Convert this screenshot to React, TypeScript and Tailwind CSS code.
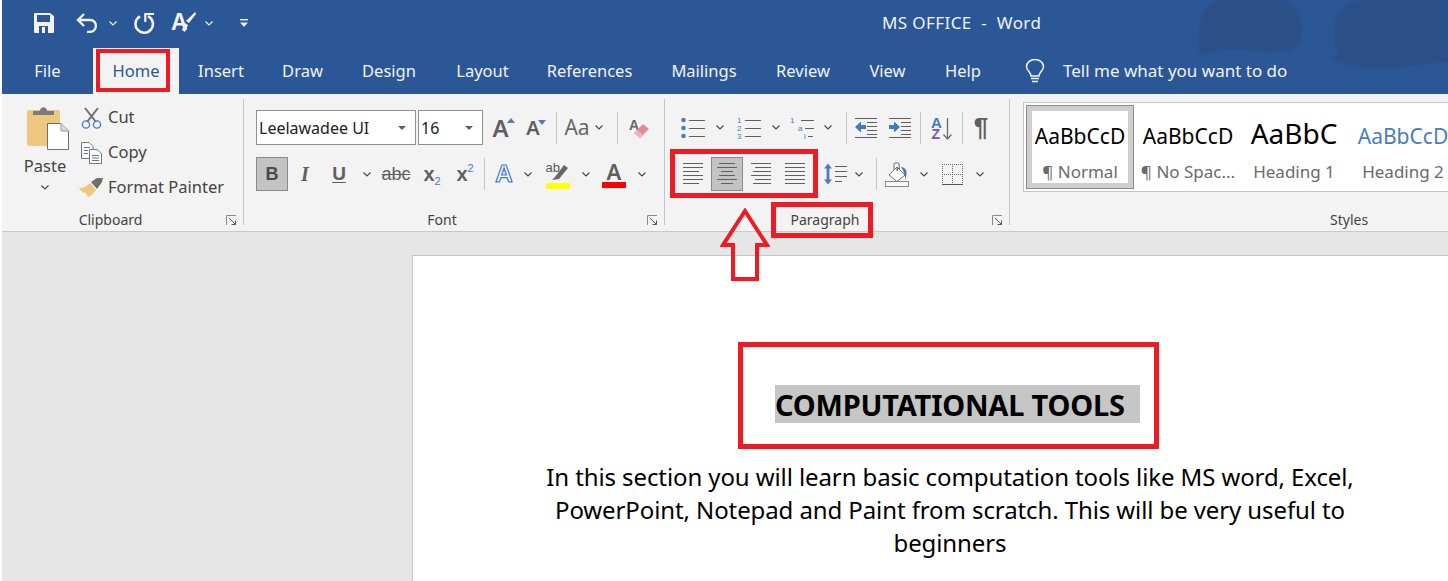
import type { ReactNode } from 'react'

const ribbonFont = "font-['Noto_Sans',sans-serif]"

const tabs = [
  { label: 'File', width: 'w-[91px]' },
  { label: 'Home', width: 'w-[86px]', active: true },
  { label: 'Insert', width: 'w-[84px]' },
  { label: 'Draw', width: 'w-[79px]' },
  { label: 'Design', width: 'w-[94px]' },
  { label: 'Layout', width: 'w-[93px]' },
  { label: 'References', width: 'w-[121px]' },
  { label: 'Mailings', width: 'w-[108px]' },
  { label: 'Review', width: 'w-[90px]' },
  { label: 'View', width: 'w-[79px]' },
  { label: 'Help', width: 'w-[72px]' },
]

function Chevron({ color = '#444444' }: { color?: string }) {
  return (
    <svg width="8" height="5" viewBox="0 0 8 5" className="shrink-0">
      <path d="M0.5 0.5 L4 4 L7.5 0.5" fill="none" stroke={color} strokeWidth="1.1" />
    </svg>
  )
}

function Slot({ className, children }: { className: string; children?: ReactNode }) {
  return <div className={`flex h-full shrink-0 items-center justify-center ${className}`}>{children}</div>
}

function Sep() {
  return <div className="h-[32px] w-px shrink-0 self-center bg-[#c6c6c6]" />
}

function Launcher() {
  return (
    <svg width="11" height="11" viewBox="0 0 11 11">
      <path d="M0.5 10 V0.5 H10" fill="none" stroke="#8a8a8a" />
      <path d="M3 3 L9.5 9.5 M9.5 5.5 V9.5 H5.5" fill="none" stroke="#555555" />
    </svg>
  )
}

function Group({ className, label, children }: { className: string; label: string; children: ReactNode }) {
  return (
    <div className={`flex h-[126px] shrink-0 flex-col border-r border-[#c6c6c6] pt-[11px] ${className}`}>
      {children}
      <div className="mt-auto flex h-[18px] translate-y-[4px] items-center">
        <div className="flex-1 text-center text-[14px] leading-[18px] text-[#444444]">{label}</div>
        <div className="flex w-[24px] justify-center">
          <Launcher />
        </div>
      </div>
    </div>
  )
}

function Lines({ rows, width = 20, gap = 4 }: { rows: [number, number][]; width?: number; gap?: number }) {
  return (
    <svg width={width} height={rows.length * gap} viewBox={`0 0 ${width} ${rows.length * gap}`}>
      {rows.map(([a, b], i) => (
        <line key={i} x1={a} x2={b} y1={i * gap + 1.5} y2={i * gap + 1.5} stroke="#5f5f5f" strokeWidth="1" />
      ))}
    </svg>
  )
}

function ListIcon({ kind }: { kind: 'bullets' | 'numbers' | 'multi' }) {
  return (
    <svg width="24" height="24" viewBox="0 0 24 24">
      {kind === 'bullets' && (
        <>
          <circle cx="2.5" cy="4" r="2.3" fill="#4a7ebb" />
          <circle cx="2.5" cy="12" r="2.3" fill="#4a7ebb" />
          <circle cx="2.5" cy="20" r="2.3" fill="#4a7ebb" />
        </>
      )}
      {kind === 'numbers' && (
        <g fill="#3f7cbf" fontSize="8" fontFamily="Liberation Sans">
          <text x="0" y="7">1</text>
          <text x="0" y="15">2</text>
          <text x="0" y="23">3</text>
        </g>
      )}
      {kind === 'multi' && (
        <g fill="#3f7cbf" fontSize="8" fontFamily="Liberation Sans">
          <text x="0" y="7">1</text>
          <text x="8" y="15">a</text>
          <text x="14" y="23">i</text>
        </g>
      )}
      <g stroke="#5f5f5f" strokeWidth="1">
        <line x1={kind === 'multi' ? 11 : 8} x2="24" y1="4.5" y2="4.5" />
        <line x1={kind === 'multi' ? 15 : 8} x2="24" y1="12.5" y2="12.5" />
        <line x1={kind === 'multi' ? 18 : 8} x2={kind === 'multi' ? 23 : 24} y1="20.5" y2="20.5" />
      </g>
    </svg>
  )
}

function IndentIcon({ flip }: { flip?: boolean }) {
  return (
    <svg width="22" height="22" viewBox="0 0 22 22">
      <g stroke="#5f5f5f" strokeWidth="1">
        <line x1="0" x2="22" y1="1.5" y2="1.5" />
        <line x1="12" x2="22" y1="5.5" y2="5.5" />
        <line x1="12" x2="22" y1="9.5" y2="9.5" />
        <line x1="12" x2="22" y1="13.5" y2="13.5" />
        <line x1="12" x2="22" y1="17.5" y2="17.5" />
        <line x1="0" x2="22" y1="20.5" y2="20.5" />
      </g>
      {flip ? (
        <path d="M0 8 H5 V4.5 L11 10 L5 15.5 V12 H0 Z" fill="#3f7cbf" />
      ) : (
        <path d="M11 8 H6 V4.5 L0 10 L6 15.5 V12 H11 Z" fill="#3f7cbf" />
      )}
    </svg>
  )
}

function SortIcon() {
  return (
    <svg width="22" height="28" viewBox="0 0 22 28">
      <text x="0" y="14" fontSize="15" fontWeight="700" fontFamily="Liberation Sans" fill="#3f7cbf">A</text>
      <text x="0.5" y="25" fontSize="14" fontWeight="700" fontFamily="Liberation Sans" fill="#8250a8">Z</text>
      <path d="M16.5 4 V25 M12.5 20.5 L16.5 25 L20.5 20.5" fill="none" stroke="#6a6a6a" strokeWidth="1.3" />
    </svg>
  )
}

function LineSpacingIcon() {
  return (
    <svg width="23" height="22" viewBox="0 0 23 22">
      <path d="M4 0.5 L8 5.5 H5.4 V16.5 H8 L4 21.5 L0 16.5 H2.6 V5.5 H0 Z" fill="#4a7ebb" />
      <g stroke="#5f5f5f">
        <line x1="11" x2="23" y1="3.5" y2="3.5" />
        <line x1="11" x2="23" y1="8.5" y2="8.5" />
        <line x1="11" x2="23" y1="13.5" y2="13.5" />
        <line x1="11" x2="18" y1="18.5" y2="18.5" />
      </g>
    </svg>
  )
}

function ShadingIcon() {
  return (
    <svg width="24" height="25" viewBox="0 0 24 25">
      <path d="M4 13 L12 5 L20 13 L12 19.5 Z" fill="#ffffff" stroke="#6f6f6f" />
      <path d="M9 8 V1.5 A3 1.5 0 0 1 14 1.5 L14.5 8" fill="none" stroke="#6f6f6f" />
      <path d="M11.5 5 H13 V9 H11.5 Z" fill="#6f6f6f" />
      <path d="M16 5 C20 5.5 22 8 21.5 12 L20.5 18 C20 14 19.5 10 16 5 Z" fill="#3f7cbf" />
      <rect x="0.5" y="19.5" width="23" height="5" fill="#f8f8f8" stroke="#8a8a8a" />
    </svg>
  )
}

function BordersIcon() {
  return (
    <svg width="21" height="21" viewBox="0 0 21 21">
      <g stroke="#666666" strokeDasharray="1 1" fill="none">
        <path d="M0 0.5 H21" />
        <path d="M0.5 0 V21" />
        <path d="M20.5 0 V21" />
        <path d="M10.5 0 V21" />
        <path d="M0 10.5 H21" />
      </g>
      <path d="M0 20.5 H21" stroke="#555555" />
    </svg>
  )
}

function PasteIcon() {
  return (
    <svg width="42" height="46" viewBox="0 0 42 46" className="translate-x-[3px]">
      <rect x="0" y="5" width="33" height="36" rx="2" fill="#edc87e" />
      <path d="M6 10 V6 H13 C13 1 20 1 20 6 H27 V10 Z" fill="#7b7b7b" />
      <path d="M20.5 18.5 H34 L41.5 26 V44.5 H20.5 Z" fill="#ffffff" stroke="#6f6f6f" />
      <path d="M34 18.5 V26 H41.5" fill="#d9d9d9" stroke="#9a9a9a" />
    </svg>
  )
}

function CutIcon() {
  return (
    <svg width="21" height="22" viewBox="0 0 21 22">
      <path d="M4 1 L15 15 M17 1 L6 15" stroke="#6f6f6f" strokeWidth="2" fill="none" />
      <circle cx="5" cy="17.5" r="3.6" fill="none" stroke="#4a7ebb" strokeWidth="1.4" />
      <circle cx="16" cy="17.5" r="3.6" fill="none" stroke="#4a7ebb" strokeWidth="1.4" />
    </svg>
  )
}

function CopyIcon() {
  return (
    <svg width="21" height="22" viewBox="0 0 21 22">
      <path d="M0.5 0.5 H8 L12 4.5 V16.5 H0.5 Z" fill="#ffffff" stroke="#777777" />
      <path d="M8.5 7.5 H16 L20.5 11.5 V21.5 H8.5 Z" fill="#ffffff" stroke="#777777" />
      <g stroke="#3f7cbf">
        <line x1="3" x2="9" y1="5.5" y2="5.5" />
        <line x1="3" x2="7" y1="8.5" y2="8.5" />
        <line x1="3" x2="7" y1="11.5" y2="11.5" />
        <line x1="11" x2="18" y1="13.5" y2="13.5" />
        <line x1="11" x2="18" y1="16" y2="16" />
        <line x1="11" x2="18" y1="18.5" y2="18.5" />
      </g>
    </svg>
  )
}

function BrushIcon() {
  return (
    <svg width="24" height="21" viewBox="0 0 24 21">
      <path d="M0 11 C5 11 8 9 11 6 L17 13 C14 17 11 20 9 20 L6 15 L4 16 Z" fill="#edc87e" />
      <path d="M12 5 L18 1 L24 1 L23 5 L18 12 Z" fill="#6f6f6f" />
    </svg>
  )
}

function EraserIcon() {
  return (
    <svg width="20" height="22" viewBox="0 0 20 22">
      <text x="0" y="13" fontSize="14" fontWeight="700" fontFamily="Liberation Sans" fill="#666666">A</text>
      <path d="M14 7 L20 12 L11 21 L5 16 Z" fill="#e8899a" />
      <path d="M5 16 L8 13 L14 18 L11 21 Z" fill="#f1b3bf" />
    </svg>
  )
}

function HighlightIcon() {
  return (
    <div className="relative h-[30px] w-[24px]">
      <span className="absolute left-0 top-[2px] font-['Liberation_Sans',sans-serif] text-[13px] leading-[13px] text-[#555555]">ab</span>
      <svg width="24" height="22" viewBox="0 0 24 22" className="absolute left-0 top-0">
        <path d="M9 18 L18 6 L22 9 L13 20 L6 21 Z" fill="#666666" />
      </svg>
      <div className="absolute bottom-0 left-0 h-[6px] w-[24px] bg-[#ffff00]" />
    </div>
  )
}

function FontColorIcon() {
  return (
    <div className="flex w-[24px] flex-col items-center">
      <span className="font-['Noto_Sans',sans-serif] text-[22px] font-semibold leading-[22px] text-[#5f5f5f]">A</span>
      <div className="h-[6px] w-[24px] bg-[#ff0000]" />
    </div>
  )
}

function BlueGlowA() {
  return (
    <span className="font-['Liberation_Sans',sans-serif] text-[24px] font-bold leading-none text-[#ffffff] [-webkit-text-stroke:1.2px_#3f7cbf]">
      A
    </span>
  )
}

function SizeA({ size, dir }: { size: string; dir: 'up' | 'down' }) {
  return (
    <div className="relative flex items-end">
      <span className={`font-['Noto_Sans',sans-serif] font-semibold leading-none text-[#5f5f5f] ${size}`}>A</span>
      <svg width="8" height="5" viewBox="0 0 8 5" className="absolute -right-[6px] top-[2px]">
        <path d={dir === 'up' ? 'M0 5 L4 0 L8 5 Z' : 'M0 0 L8 0 L4 5 Z'} fill="#4a7ebb" />
      </svg>
    </div>
  )
}

function Combo({ className, value }: { className: string; value: string }) {
  return (
    <div className={`flex h-full shrink-0 items-center justify-between border border-[#8f8f8f] bg-white pl-[2px] pr-[9px] text-[16px] text-[#222222] ${className}`}>
      <span>{value}</span>
      <svg width="8" height="4" viewBox="0 0 8 4">
        <path d="M0 0 H8 L4 4 Z" fill="#5f5f5f" />
      </svg>
    </div>
  )
}

function ClipAction({ icon, label }: { icon: ReactNode; label: string }) {
  return (
    <div className="flex h-[35px] items-center">
      <div className="flex w-[26px] justify-center">{icon}</div>
      <span className="ml-[4px] whitespace-nowrap text-[16.5px] text-[#444444]">{label}</span>
    </div>
  )
}

function StyleCell({ className, preview, label, previewClass }: { className: string; preview: string; label: string; previewClass: string }) {
  return (
    <div className={`flex h-full shrink-0 flex-col items-center overflow-hidden ${className}`}>
      <div className={`flex h-[46px] items-end whitespace-nowrap ${previewClass}`}>{preview}</div>
      <div className="mt-[10px] whitespace-nowrap text-[17px] leading-[22px] text-[#6a6a6a]">{label}</div>
    </div>
  )
}

function TitleBar() {
  return (
    <div className="relative flex h-[48px] items-center pb-[2px] text-white">
      <div className="ml-[32px] flex h-full items-center">
        <svg width="20" height="20" viewBox="0 0 20 20">
          <path d="M1 0 H16 L20 3 V19 A1 1 0 0 1 19 20 H1 A1 1 0 0 1 0 19 V1 A1 1 0 0 1 1 0 Z" fill="#f2f2f2" />
          <rect x="3" y="2" width="13" height="7" fill="#2b5797" />
          <rect x="5" y="13" width="9" height="7" fill="#2b5797" />
          <rect x="8" y="14" width="3" height="6" fill="#f2f2f2" />
        </svg>
        <svg width="22" height="20" viewBox="0 0 22 20" className="ml-[22px]">
          <path d="M8 1 L2 7 L8 13 M2 7 H14 C22 7 22 19 13 19 H11" fill="none" stroke="#f2f2f2" strokeWidth="2.4" />
        </svg>
        <div className="ml-[11px]"><Chevron color="#f2f2f2" /></div>
        <svg width="21" height="21" viewBox="0 0 21 21" className="ml-[17px]">
          <path d="M6 3.4 A8.7 8.7 0 1 0 14 3.2" fill="none" stroke="#f2f2f2" strokeWidth="2.6" />
          <path d="M20 1 H11.3 V9" fill="none" stroke="#f2f2f2" strokeWidth="2.2" />
        </svg>
        <div className="relative ml-[16px] h-[22px] w-[25px]">
          <span className="absolute left-0 top-[-1px] font-['Liberation_Sans',sans-serif] text-[23px] font-bold leading-[23px] text-[#f2f2f2]">A</span>
          <svg width="14" height="20" viewBox="0 0 14 20" className="absolute right-0 top-0">
            <path d="M13 0 L14 2 L7 11 L4 9 Z M3 11 L6 13 L3 20 L0 18 Z" fill="#f2f2f2" />
          </svg>
        </div>
        <div className="ml-[9px]"><Chevron color="#f2f2f2" /></div>
        <svg width="8" height="8" viewBox="0 0 8 8" className="ml-[27px]">
          <rect x="0" y="0" width="8" height="1.4" fill="#f2f2f2" />
          <path d="M0 3.5 H8 L4 8 Z" fill="#f2f2f2" />
        </svg>
      </div>
      <div className="ml-[634px] whitespace-pre text-[17px] tracking-[0.4px] text-[#f2f2f2]">MS OFFICE  -  Word</div>
    </div>
  )
}

function TabBar() {
  return (
    <div className="relative flex h-[46px] items-center">
      {tabs.map((tab) => (
        <div
          key={tab.label}
          className={`flex h-full shrink-0 items-center justify-center text-[16.5px] ${tab.width} ${
            tab.active ? 'bg-[#f3f3f3] text-[#2b5797]' : 'text-[#f2f2f2]'
          }`}
        >
          {tab.label}
        </div>
      ))}
      <svg width="20" height="24" viewBox="0 0 20 24" className="ml-[26px]">
        <path d="M6 17 C6 13 1.5 12 1.5 7.5 A8.5 7 0 0 1 18.5 7.5 C18.5 12 14 13 14 17 Z" fill="none" stroke="#f2f2f2" strokeWidth="1.5" />
        <path d="M6 19.5 H14 M7 22.5 H13" stroke="#f2f2f2" strokeWidth="1.6" />
      </svg>
      <div className="ml-[18px] text-[17px] text-[#f2f2f2]">Tell me what you want to do</div>
    </div>
  )
}

function ClipboardGroup() {
  return (
    <Group className="w-[242px]" label="Clipboard">
      <div className="flex h-[97px]">
        <div className="-mt-[5px] ml-[21px] flex w-[44px] flex-col items-center">
          <PasteIcon />
          <div className="mt-[4px] text-[16.5px] leading-[22px] text-[#444444]">Paste</div>
          <div className="mt-[8px]"><Chevron /></div>
        </div>
        <div className="-mt-[10px] ml-[11px] flex flex-col">
          <ClipAction icon={<CutIcon />} label="Cut" />
          <ClipAction icon={<CopyIcon />} label="Copy" />
          <ClipAction icon={<BrushIcon />} label="Format Painter" />
        </div>
      </div>
    </Group>
  )
}

function FontGroup() {
  return (
    <Group className="w-[421px]" label="Font">
      <div className="ml-[12px] flex h-[35px] items-center">
        <Combo className="w-[160px]" value="Leelawadee UI" />
        <Combo className="ml-[2px] w-[65px]" value="16" />
        <Slot className="w-[35px]"><SizeA size="text-[24px]" dir="up" /></Slot>
        <Slot className="w-[30px]"><SizeA size="text-[20px]" dir="down" /></Slot>
        <Slot className="w-[8px]" />
        <Sep />
        <Slot className="ml-[2px] w-[36px] text-[21px] text-[#666666]">Aa</Slot>
        <Slot className="w-[8px]"><Chevron /></Slot>
        <Slot className="w-[14px]" />
        <Sep />
        <Slot className="w-[42px]"><EraserIcon /></Slot>
      </div>
      <div className="ml-[12px] mt-[12px] flex h-[34px] items-center font-['Liberation_Sans',sans-serif]">
        <Slot className="w-[32px] border border-[#8a8a8a] bg-[#c3c3c3] text-[18px] font-bold text-[#4a4a4a]">B</Slot>
        <Slot className="w-[34px] font-['Liberation_Serif',serif] text-[20px] font-bold italic text-[#5f5f5f]">I</Slot>
        <Slot className="w-[34px] text-[19px] font-bold text-[#5f5f5f] underline underline-offset-2">U</Slot>
        <Slot className="w-[22px]"><Chevron /></Slot>
        <Slot className="w-[36px] text-[18px] text-[#5f5f5f] line-through">abc</Slot>
        <Slot className="w-[36px] text-[#5f5f5f]">
          <span className="text-[20px] font-bold">x</span>
          <span className="mt-[14px] text-[11px] text-[#3f7cbf]">2</span>
        </Slot>
        <Slot className="w-[30px] text-[#5f5f5f]">
          <span className="text-[20px] font-bold">x</span>
          <span className="-mt-[12px] text-[11px] text-[#3f7cbf]">2</span>
        </Slot>
        <Slot className="w-[4px]" />
        <Sep />
        <Slot className="w-[38px]"><BlueGlowA /></Slot>
        <Slot className="w-[10px]"><Chevron /></Slot>
        <Slot className="w-[49px]"><HighlightIcon /></Slot>
        <Slot className="w-[8px]"><Chevron /></Slot>
        <Slot className="w-[48px]"><FontColorIcon /></Slot>
        <Slot className="w-[8px]"><Chevron /></Slot>
      </div>
    </Group>
  )
}

function ParagraphGroup() {
  return (
    <Group className="w-[345px]" label="Paragraph">
      <div className="ml-[7px] flex h-[35px] items-center">
        <Slot className="w-[42px]"><ListIcon kind="bullets" /></Slot>
        <Slot className="w-[12px]"><Chevron /></Slot>
        <Slot className="w-[46px]"><ListIcon kind="numbers" /></Slot>
        <Slot className="w-[8px]"><Chevron /></Slot>
        <Slot className="w-[44px]"><ListIcon kind="multi" /></Slot>
        <Slot className="w-[8px]"><Chevron /></Slot>
        <Slot className="w-[14px]" />
        <Sep />
        <Slot className="w-[38px]"><IndentIcon /></Slot>
        <Slot className="w-[30px]"><IndentIcon flip /></Slot>
        <Slot className="w-[5px]" />
        <Sep />
        <Slot className="w-[41px]"><SortIcon /></Slot>
        <Sep />
        <Slot className="w-[36px] font-['Liberation_Sans',sans-serif] text-[26px] font-bold text-[#5f5f5f]">¶</Slot>
      </div>
      <div className="ml-[10px] mt-[12px] flex h-[34px] items-center">
        <Slot className="w-[36px]">
          <Lines rows={[[0, 20], [0, 20], [0, 16], [0, 20], [0, 20], [0, 16]]} />
        </Slot>
        <Slot className="w-[32px] border border-[#8a8a8a] bg-[#c3c3c3]">
          <Lines rows={[[2, 18], [0, 20], [4, 16], [2, 18], [0, 20], [4, 16]]} />
        </Slot>
        <Slot className="w-[36px]">
          <Lines rows={[[0, 20], [4, 20], [2, 20], [0, 20], [4, 20], [2, 20]]} />
        </Slot>
        <Slot className="w-[32px]">
          <Lines rows={[[0, 20], [0, 20], [0, 20], [0, 20], [0, 20], [0, 20]]} />
        </Slot>
        <Slot className="w-[44px] pl-[4px]"><LineSpacingIcon /></Slot>
        <Slot className="w-[8px]"><Chevron /></Slot>
        <Slot className="w-[13px]" />
        <Sep />
        <Slot className="w-[40px]"><ShadingIcon /></Slot>
        <Slot className="ml-[3px] w-[8px]"><Chevron /></Slot>
        <Slot className="w-[48px]"><BordersIcon /></Slot>
        <Slot className="w-[8px]"><Chevron /></Slot>
      </div>
    </Group>
  )
}

function StylesGroup() {
  return (
    <div className="flex h-[126px] min-w-0 flex-1 flex-col pl-[13px] pt-[3px]">
      <div className="flex h-[90px] items-stretch overflow-hidden border border-r-0 border-[#c6c6c6] bg-white p-[2px]">
        <div className="h-full w-[108px] shrink-0 border border-[#8a8a8a] bg-[#d0cecb] p-[5px]">
          <div className="h-full bg-white">
            <StyleCell className="w-full" preview="AaBbCcD" label="¶ Normal" previewClass="text-[21px] leading-[30px] text-black" />
          </div>
        </div>
        <StyleCell className="ml-[1px] w-[106px]" preview="AaBbCcD" label="¶ No Spac..." previewClass="text-[21px] leading-[30px] text-black" />
        <StyleCell className="w-[106px]" preview="AaBbC" label="Heading 1" previewClass="text-[28px] leading-[36px] text-black" />
        <StyleCell className="w-[112px]" preview="AaBbCcD" label="Heading 2" previewClass="text-[21px] leading-[30px] text-[#4a7ebb]" />
      </div>
      <div className="mt-auto translate-y-[4px] pl-[307px] text-[14px] leading-[18px] text-[#444444]">Styles</div>
    </div>
  )
}

function Annotations() {
  return (
    <>
      <div className="absolute left-[96px] top-[49px] h-[43px] w-[74px] border-4 border-[#ed1c24]" />
      <div className="absolute left-[670px] top-[149px] h-[49px] w-[148px] border-[5px] border-[#ed1c24]" />
      <div className="absolute left-[771px] top-[202px] h-[36px] w-[102px] border-[5px] border-[#ed1c24]" />
      <div className="absolute left-[738px] top-[342px] h-[107px] w-[421px] border-[5px] border-[#ed1c24]" />
      <svg width="50" height="74" viewBox="0 0 50 74" className="absolute left-[720px] top-[208px]">
        <path d="M25 3 L47 37 H37 V71 H13 V37 H3 Z" fill="none" stroke="#ed1c24" strokeWidth="4" />
      </svg>
    </>
  )
}

export default function App() {
  return (
    <div className={`relative flex h-[581px] w-[1448px] overflow-hidden bg-white ${ribbonFont}`}>
      <div className="w-[2px] shrink-0 bg-white" />
      <div className="flex min-w-0 flex-1 flex-col">
        <div className="relative overflow-hidden bg-[#2b5797]">
          <svg width="250" height="94" viewBox="0 0 250 94" className="absolute right-0 top-0 blur-[1px]">
            <path d="M2 56 C-2 30 0 8 22 0 H88 C108 14 110 40 92 50 C62 56 30 42 2 56 Z" fill="#2b5087" />
            <path d="M137 44 C132 20 144 4 160 0 H250 V62 C214 64 170 78 130 58 C146 58 140 50 137 44 Z" fill="#2b5087" />
          </svg>
          <TitleBar />
          <TabBar />
        </div>
        <div className="flex h-[138px] border-b border-[#c9c9c9] bg-[#f3f3f3] pt-[5px]">
          <ClipboardGroup />
          <FontGroup />
          <ParagraphGroup />
          <StylesGroup />
        </div>
        <div className="flex-1 bg-[#e6e6e6] pl-[410px] pt-[23px]">
          <div className="h-full border-l border-t border-[#c6c6c6] bg-white pl-[106px] pt-[129px]">
            <div className="w-[862px] text-center text-black">
              <div className="ml-[256px] flex h-[38px] w-[365px] items-center bg-[#c6c6c6] pt-[1px] text-[29px] font-bold tracking-[-0.2px]">
                COMPUTATIONAL TOOLS
              </div>
              <div className="mt-[37px] text-[24px] leading-[33px] tracking-[-0.1px]">
                In this section you will learn basic computation tools like MS word, Excel,
                <br />
                PowerPoint, Notepad and Paint from scratch. This will be very useful to
                <br />
                beginners
              </div>
            </div>
          </div>
        </div>
      </div>
      <Annotations />
    </div>
  )
}
